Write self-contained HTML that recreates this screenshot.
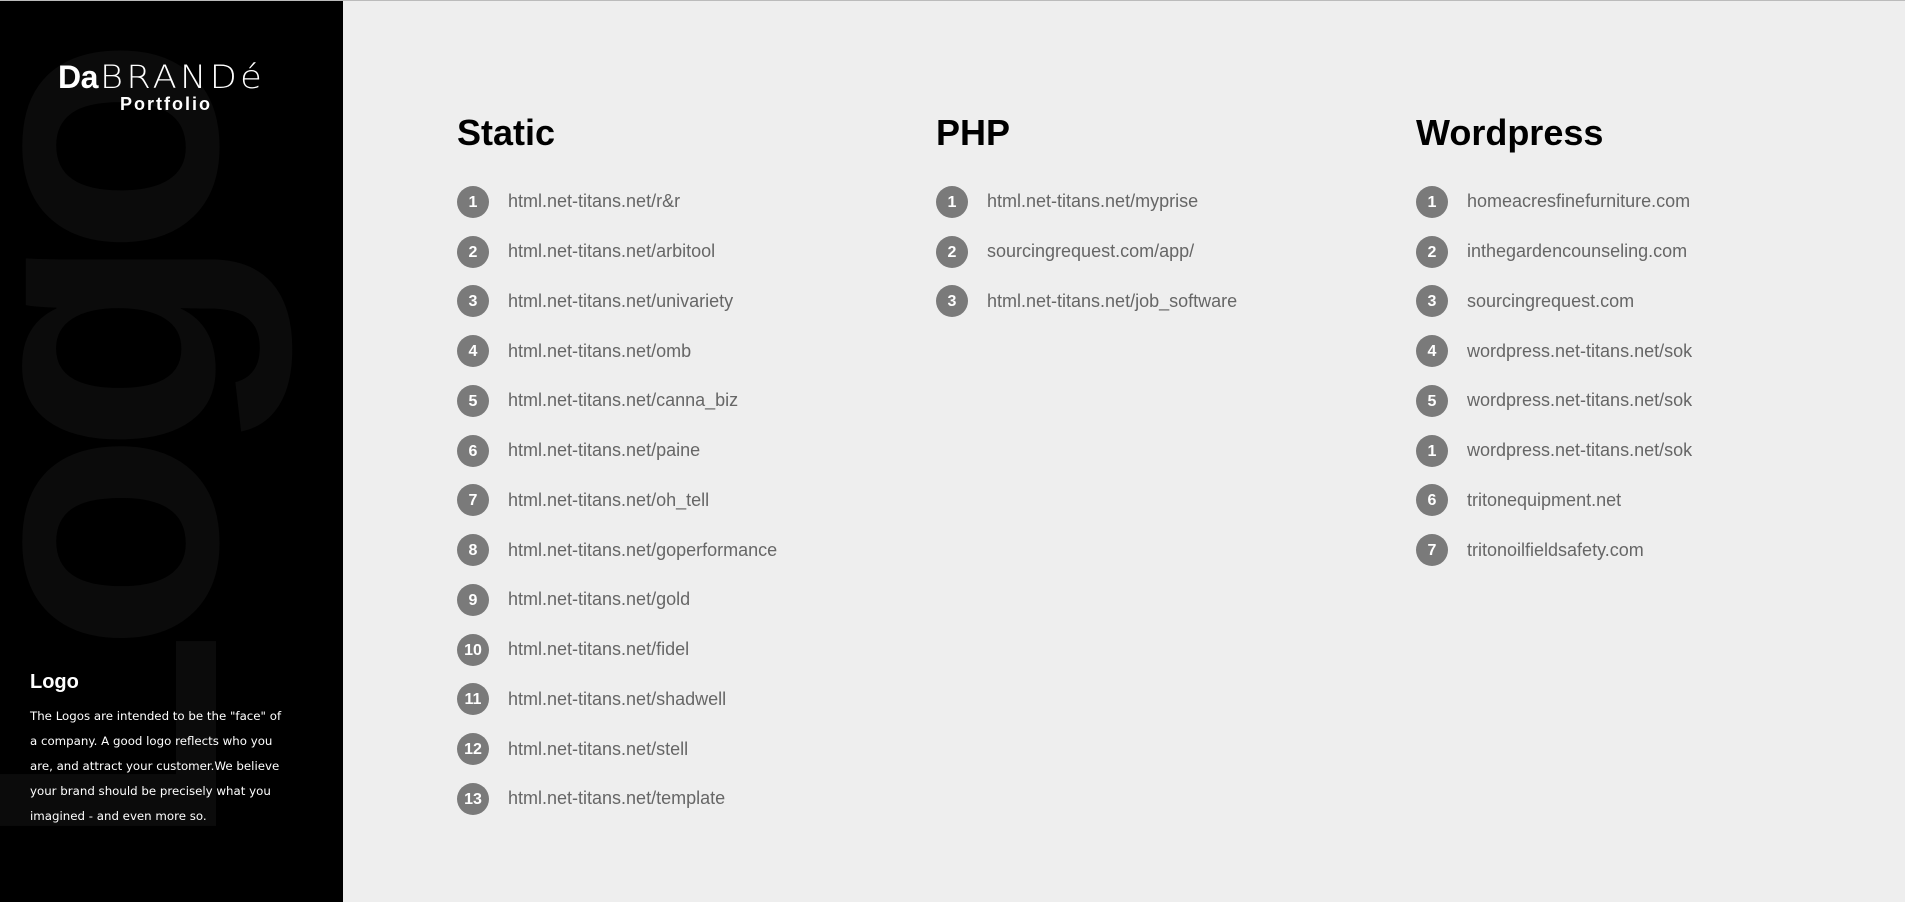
<!DOCTYPE html>
<html><head><meta charset="utf-8"><style>
*{margin:0;padding:0;box-sizing:border-box}
html,body{width:1905px;height:902px;overflow:hidden;background:#eeeeee;font-family:"Liberation Sans",sans-serif}
.top{position:absolute;left:0;top:0;width:1905px;height:1px;background:#bbb}
.side{position:absolute;left:0;top:1px;width:343px;height:901px;background:#000;overflow:hidden}
.big{position:absolute;left:-88px;top:849px;transform-origin:0 0;transform:rotate(-90deg);font-family:"Liberation Sans",sans-serif;font-weight:bold;font-size:360px;color:#0b0b0b;line-height:1;white-space:nowrap;letter-spacing:-22px}
.brand{position:absolute;left:58px;top:60px;color:#fff;font-size:32px;line-height:1;white-space:nowrap}
.brand b{font-weight:bold;letter-spacing:-0.5px}
.brand span{font-family:"DejaVu Sans",sans-serif;font-weight:200;display:inline-block;transform-origin:0 50%;transform:scaleX(1.1);letter-spacing:3px;margin-left:2px}
.pf{position:absolute;left:120px;top:93px;color:#fff;font-size:18px;font-weight:bold;letter-spacing:2px}
.lt{position:absolute;left:30px;top:670px;color:#fff;font-size:20px;font-weight:bold}
.lp{position:absolute;left:30px;top:703px;width:262px;color:#fff;line-height:25px;font-family:"DejaVu Sans","Liberation Sans",sans-serif;font-size:11.8px}
.col{position:absolute;top:108px}
.col h2{font-size:36px;font-weight:bold;color:#000;line-height:50px;height:69px}
.row{position:relative;height:49.75px;display:flex;align-items:center}
.n{width:32px;height:32px;border-radius:50%;background:#7a7a7a;color:#fff;font-weight:bold;font-size:16px;display:flex;align-items:center;justify-content:center;flex:none;padding-top:2px}
.t{margin-left:19px;font-size:18px;color:#666}
</style></head><body>
<div class="top"></div>
<div class="side">
<div class="big">Logo</div>
<div class="brand"><b>Da</b><span>BRANDé</span></div>
<div class="pf">Portfolio</div>
<div class="lt">Logo</div>
<div class="lp">The Logos are intended to be the "face" of a company. A good logo reflects who you are, and attract your customer.We believe your brand should be precisely what you imagined - and even more so.</div>
</div>
<div class="col" style="left:457px"><h2>Static</h2>
<div class="row"><div class="n">1</div><div class="t">html.net-titans.net/r&amp;r</div></div>
<div class="row"><div class="n">2</div><div class="t">html.net-titans.net/arbitool</div></div>
<div class="row"><div class="n">3</div><div class="t">html.net-titans.net/univariety</div></div>
<div class="row"><div class="n">4</div><div class="t">html.net-titans.net/omb</div></div>
<div class="row"><div class="n">5</div><div class="t">html.net-titans.net/canna_biz</div></div>
<div class="row"><div class="n">6</div><div class="t">html.net-titans.net/paine</div></div>
<div class="row"><div class="n">7</div><div class="t">html.net-titans.net/oh_tell</div></div>
<div class="row"><div class="n">8</div><div class="t">html.net-titans.net/goperformance</div></div>
<div class="row"><div class="n">9</div><div class="t">html.net-titans.net/gold</div></div>
<div class="row"><div class="n">10</div><div class="t">html.net-titans.net/fidel</div></div>
<div class="row"><div class="n">11</div><div class="t">html.net-titans.net/shadwell</div></div>
<div class="row"><div class="n">12</div><div class="t">html.net-titans.net/stell</div></div>
<div class="row"><div class="n">13</div><div class="t">html.net-titans.net/template</div></div>
</div>
<div class="col" style="left:936px"><h2>PHP</h2>
<div class="row"><div class="n">1</div><div class="t">html.net-titans.net/myprise</div></div>
<div class="row"><div class="n">2</div><div class="t">sourcingrequest.com/app/</div></div>
<div class="row"><div class="n">3</div><div class="t">html.net-titans.net/job_software</div></div>
</div>
<div class="col" style="left:1416px"><h2>Wordpress</h2>
<div class="row"><div class="n">1</div><div class="t">homeacresfinefurniture.com</div></div>
<div class="row"><div class="n">2</div><div class="t">inthegardencounseling.com</div></div>
<div class="row"><div class="n">3</div><div class="t">sourcingrequest.com</div></div>
<div class="row"><div class="n">4</div><div class="t">wordpress.net-titans.net/sok</div></div>
<div class="row"><div class="n">5</div><div class="t">wordpress.net-titans.net/sok</div></div>
<div class="row"><div class="n">1</div><div class="t">wordpress.net-titans.net/sok</div></div>
<div class="row"><div class="n">6</div><div class="t">tritonequipment.net</div></div>
<div class="row"><div class="n">7</div><div class="t">tritonoilfieldsafety.com</div></div>
</div>
</body></html>
